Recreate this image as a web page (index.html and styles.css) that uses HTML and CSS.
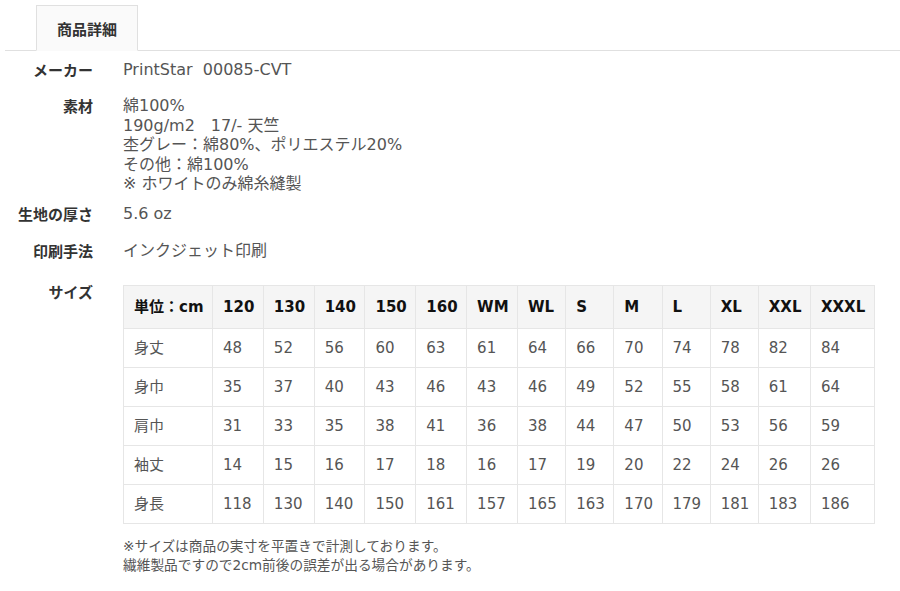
FILE: index.html
```html
<!DOCTYPE html>
<html lang="ja">
<head>
<meta charset="utf-8">
<link rel="stylesheet" href="styles.css">
</head>
<body>
<div class="panel">
  <ul class="tabs">
    <li class="tab active">商品詳細</li>
  </ul>
  <dl class="specs">
    <div class="row row-maker">
      <dt>メーカー</dt>
      <dd>PrintStar&nbsp; 00085-CVT</dd>
    </div>
    <div class="row row-material">
      <dt>素材</dt>
      <dd class="multi">綿100%<br>190g/m2　17/- 天竺<br>杢グレー：綿80%、ポリエステル20%<br>その他：綿100%<br>※ ホワイトのみ綿糸縫製</dd>
    </div>
    <div class="row row-thick">
      <dt>生地の厚さ</dt>
      <dd>5.6 oz</dd>
    </div>
    <div class="row row-print">
      <dt>印刷手法</dt>
      <dd>インクジェット印刷</dd>
    </div>
    <div class="row row-size">
      <dt>サイズ</dt>
      <dd>
        <table class="size-table">
          <thead>
            <tr><th>単位：cm</th><th>120</th><th>130</th><th>140</th><th>150</th><th>160</th><th>WM</th><th>WL</th><th>S</th><th>M</th><th>L</th><th>XL</th><th>XXL</th><th>XXXL</th></tr>
          </thead>
          <tbody>
            <tr><td>身丈</td><td>48</td><td>52</td><td>56</td><td>60</td><td>63</td><td>61</td><td>64</td><td>66</td><td>70</td><td>74</td><td>78</td><td>82</td><td>84</td></tr>
            <tr><td>身巾</td><td>35</td><td>37</td><td>40</td><td>43</td><td>46</td><td>43</td><td>46</td><td>49</td><td>52</td><td>55</td><td>58</td><td>61</td><td>64</td></tr>
            <tr><td>肩巾</td><td>31</td><td>33</td><td>35</td><td>38</td><td>41</td><td>36</td><td>38</td><td>44</td><td>47</td><td>50</td><td>53</td><td>56</td><td>59</td></tr>
            <tr><td>袖丈</td><td>14</td><td>15</td><td>16</td><td>17</td><td>18</td><td>16</td><td>17</td><td>19</td><td>20</td><td>22</td><td>24</td><td>26</td><td>26</td></tr>
            <tr><td>身長</td><td>118</td><td>130</td><td>140</td><td>150</td><td>161</td><td>157</td><td>165</td><td>163</td><td>170</td><td>179</td><td>181</td><td>183</td><td>186</td></tr>
          </tbody>
        </table>
        <p class="note">※サイズは商品の実寸を平置きで計測しております。<br>繊維製品ですので2cm前後の誤差が出る場合があります。</p>
      </dd>
    </div>
  </dl>
</div>
</body>
</html>
```

FILE: styles.css
```css
* { box-sizing: border-box; }
html, body { margin: 0; padding: 0; background: #fff; }
body {
  font-family: "DejaVu Sans", "Noto Sans CJK JP", sans-serif;
  font-size: 16px;
  color: #555;
}
.panel { padding: 5px 0 0 5px; }
.tabs {
  list-style: none;
  margin: 0;
  padding: 0 0 0 31px;
  display: flex;
  border-bottom: 1px solid #e0e0e0;
}
.tab {
  width: 102px;
  height: 46px;
  margin-bottom: -1px;
  display: flex;
  align-items: center;
  justify-content: center;
  font-family: "Noto Sans CJK JP", sans-serif;
  font-weight: bold;
  font-size: 15px;
  color: #333;
  background: #fafafa;
  border: 1px solid #e0e0e0;
  border-bottom-color: #fafafa;
}
.specs { margin: 0; padding: 9px 0 0 0; }
.row { display: flex; gap: 30px; line-height: 20px; }
.row dt {
  width: 88px;
  flex: none;
  text-align: right;
  font-family: "Noto Sans CJK JP", sans-serif;
  font-size: 15px;
  font-weight: bold;
  color: #333;
}
.row dd { margin: 0; }
.multi { line-height: 19.5px; }
.row-maker { margin-bottom: 16px; }
.row-material { margin-bottom: 10px; }
.row-thick { margin-bottom: 17px; }
.row-print { margin-bottom: 21px; }
.row-size dd { padding-top: 3px; }
.size-table {
  border-collapse: collapse;
  font-size: 15px;
}
.size-table th, .size-table td {
  border: 1px solid #e6e6e6;
  padding: 0 8.5px 0 10px;
  text-align: left;
  white-space: nowrap;
}
.size-table th {
  height: 43px;
  background: #f5f5f5;
  color: #111;
  font-weight: bold;
}
.size-table td { height: 39px; color: #555; }
.note {
  margin: 13px 0 0 0;
  font-size: 13.7px;
  line-height: 19px;
  color: #555;
}
```
